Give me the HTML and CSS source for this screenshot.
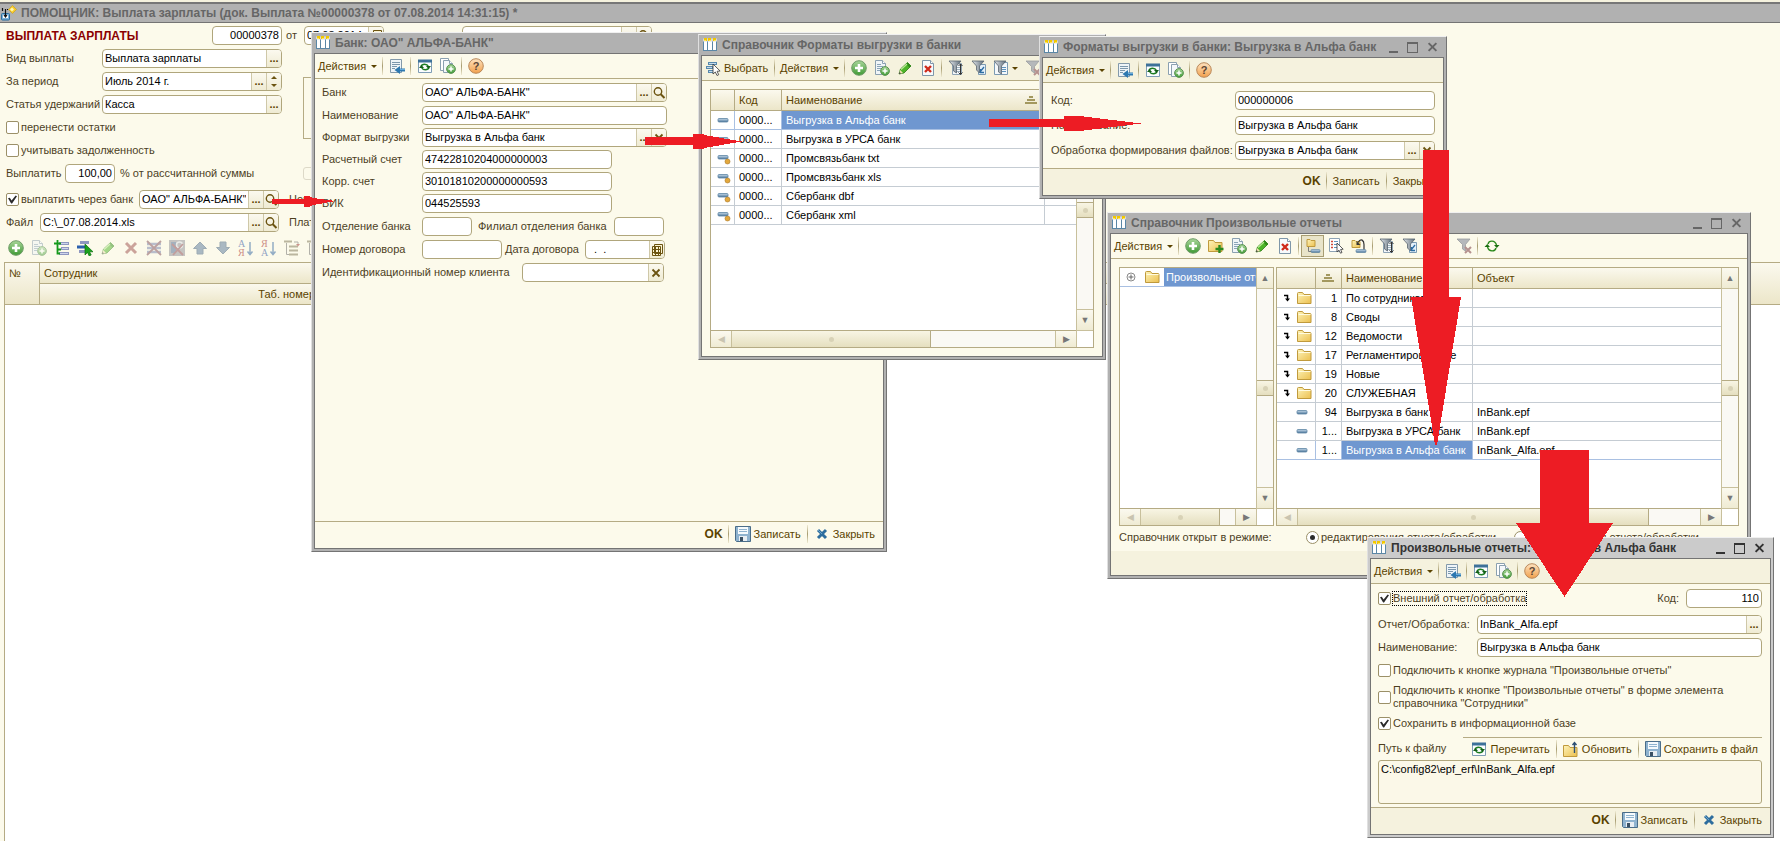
FILE: index.html
```html
<!DOCTYPE html>
<html lang="ru">
<head>
<meta charset="utf-8">
<title>ПОМОЩНИК: Выплата зарплаты</title>
<link rel="stylesheet" href="styles.css">
</head>
<body>
<svg class="defs" aria-hidden="true">
  <defs>
    <linearGradient id="g-green" x1="0" y1="0" x2="0" y2="1"><stop offset="0" stop-color="#a9d69a"/><stop offset="1" stop-color="#3f9a34"/></linearGradient>
    <linearGradient id="g-orange" x1="0" y1="0" x2="0" y2="1"><stop offset="0" stop-color="#fde3c0"/><stop offset="1" stop-color="#f2a04c"/></linearGradient>
    <linearGradient id="g-folder" x1="0" y1="0" x2="1" y2="1"><stop offset="0" stop-color="#fdf3b8"/><stop offset="1" stop-color="#ecc04f"/></linearGradient>
    <linearGradient id="g-steel" x1="0" y1="0" x2="1" y2="0"><stop offset="0" stop-color="#e4e8ec"/><stop offset="1" stop-color="#5f6d7a"/></linearGradient>
    <linearGradient id="g-blue" x1="0" y1="0" x2="0" y2="1"><stop offset="0" stop-color="#c9dcec"/><stop offset="1" stop-color="#4b7599"/></linearGradient>
  </defs>
  <symbol id="i-form" viewBox="0 0 16 16"><rect x="1.500" y="2.500" width="13" height="11" fill="#fff" stroke="#5b87a6"/><path d="M5.500 4v9M10.500 4v9" stroke="#5b87a6"/><path d="M1 3h14" stroke="#d9d9d9" stroke-width="3"/><path d="M2 2.500h3M6 2.500h3M11 2.500h3" stroke="#f2c800" stroke-width="3"/><path d="M2 3.500h2M7 3.500h2M12 3.500h2" stroke="#ffe75a"/></symbol>
  <symbol id="i-assist" viewBox="0 0 16 16"><rect x=".5" y="8.500" width="8" height="6.500" rx="1" fill="#7fb2d8" stroke="#2b6d9e"/><path d="M2 10h5v3H2z" fill="#fff"/><path d="M1.500 3v3M4.500 4v8M3 10l1.500 2L6 10" fill="none" stroke="#111" stroke-width="1.200"/><path d="M4 4.500h3" stroke="#111" stroke-dasharray="1 1"/><path d="M11.500.5L15.500 4.500l-4 4-4-4z" fill="#f7cb2d" stroke="#c89c12" stroke-width=".6"/><path d="M11 2.500l2 2-2 2-2-2z" fill="#fff8b5"/></symbol>
  <symbol id="i-import" viewBox="0 0 16 16"><path d="M1.500 1.500h11v13h-11z" fill="#eef4f8" stroke="#8399aa"/><path d="M3 4.500h8M3 6.500h8M3 8.500h5M3 10.500h3" stroke="#7b97ad"/><path d="M16 10.500h-5V8l-5.500 4 5.500 4v-2.500h5z" fill="#2d78b0"/><path d="M11 11.500h5" stroke="#66aadb"/></symbol>
  <symbol id="i-refresh" viewBox="0 0 16 16"><path d="M1.500 2.500h13v12h-13z" fill="#fbfdff" stroke="#7f9db5"/><path d="M1 3h14" stroke="#3d7199" stroke-width="3"/><path d="M4 8.500c1-3 6-3 7.500 0M12 9.500c-1 3-6 3-7.500 0" fill="none" stroke="#1d7d22" stroke-width="1.500"/><path d="M9 8h5l-2.500 3zM2 10h5L4.500 7z" fill="#125f17"/></symbol>
  <symbol id="i-cycle" viewBox="0 0 16 16"><path d="M4 6c1-4 7-4 8.500 1M12 10c-1 4-7 4-8.500-1" fill="none" stroke="#2a8a1c" stroke-width="1.400"/><path d="M10 7h5.500l-2.700 3zM.5 9H6L3.300 6z" fill="#1a6f10"/></symbol>
  <symbol id="i-plus" viewBox="0 0 16 16"><circle cx="8" cy="8" r="7.300" fill="url(#g-green)" stroke="#6f9c68"/><path d="M8 4v8M4 8h8" stroke="#fff" stroke-width="2.600"/></symbol>
  <symbol id="i-docplus" viewBox="0 0 16 16"><path d="M1.500.5h7l3 3v11h-10z" fill="#f0f5f8" stroke="#8ba0b0"/><path d="M8.500.5v3h3" fill="#fff" stroke="#8ba0b0"/><path d="M3 4.500h4M3 6.500h6M3 8.500h5M3 10.500h3" stroke="#8aa4b8"/><circle cx="11" cy="11" r="4.400" fill="url(#g-green)" stroke="#5b9454"/><path d="M11 8.500v5M8.500 11h5" stroke="#fff" stroke-width="1.500"/></symbol>
  <symbol id="i-copy" viewBox="0 0 16 16"><path d="M.5.500h8v12h-8z" fill="#fff" stroke="#8ba0b0"/><path d="M3.500 2.500h6l3 3v9h-9z" fill="#f5f8fb" stroke="#8ba0b0"/><path d="M9.500 2.500v3h3" fill="#fff" stroke="#8ba0b0"/><circle cx="11" cy="11" r="4.400" fill="url(#g-green)" stroke="#5b9454"/><path d="M11 8.500v5M8.500 11h5" stroke="#fff" stroke-width="1.500"/></symbol>
  <symbol id="i-help" viewBox="0 0 16 16"><circle cx="8" cy="8" r="7.300" fill="url(#g-orange)" stroke="#b9885a"/><text x="8" y="12" font-family="Liberation Sans, sans-serif" font-size="11" font-weight="bold" text-anchor="middle" fill="#5a4636">?</text></symbol>
  <symbol id="i-pencil" viewBox="0 0 16 16"><path d="M2 14l1.500-5 7-6.500 3.500 3.500-7 7z" fill="#4eb52a" stroke="#2d7a17" stroke-width=".8"/><path d="M9 4l3.500 3.500L14 6l-3.500-3.500z" fill="#2e8b17"/><path d="M4 9.500l6-5.500" stroke="#b7ea93" stroke-width="1.300"/><path d="M2 14l1.200-4 2.800 3z" fill="#f2e2b5"/><path d="M2 14l.6-2 1.400 1.400z" fill="#2b2b2b"/></symbol>
  <symbol id="i-delete" viewBox="0 0 16 16"><path d="M2.500.5h8l3 3v12h-11z" fill="#f7fafc" stroke="#7f97a9"/><path d="M10.500.5v3h3" fill="#fff" stroke="#7f97a9"/><path d="M5 6l6 6M11 6l-6 6" stroke="#cf2a1c" stroke-width="2.400"/></symbol>
  <symbol id="i-filter" viewBox="0 0 16 16"><path d="M4.500 3.500h9v11h-9z" fill="#f4f8fb" stroke="#8ea3b4"/><path d="M6 7.500h6M6 9.500h6M6 11.500h6" stroke="#9fb2c0"/><path d="M1 1h12L8.500 6v7l-3-2V6z" fill="url(#g-steel)" stroke="#59656f" stroke-width=".8"/><path d="M12.500 4v10M10.500 6l2-2 2 2M10.500 12.500l2 2 2-2" fill="none" stroke="#333"/></symbol>
  <symbol id="i-filterpick" viewBox="0 0 16 16"><path d="M7.500 4.500h7v10h-7z" fill="#e4f0f9" stroke="#7b9ab2"/><path d="M1 1h12L8.500 6v7l-3-3V6z" fill="url(#g-steel)" stroke="#59656f" stroke-width=".8"/><path d="M9 12l4-5M9.500 9v3.500H13" fill="none" stroke="#2c6da3" stroke-width="1.300"/></symbol>
  <symbol id="i-filterlist" viewBox="0 0 16 16"><path d="M1.500 2.500h13v12h-13z" fill="#f4f8fb" stroke="#7b9ab2"/><path d="M9 7.500h4M9 9.500h4M9 11.500h4" stroke="#5f93bd"/><path d="M1 1h12L8.500 6v8l-3-2V6z" fill="url(#g-steel)" stroke="#59656f" stroke-width=".8"/></symbol>
  <symbol id="i-filteroff" viewBox="0 0 16 16"><path d="M1 1h13L9.500 6.500V13l-3-2V6.500z" fill="#b5b8bb" stroke="#9a9da0" stroke-width=".8"/><path d="M9 9l6 6M15 9l-6 6" stroke="#b5918f" stroke-width="2"/></symbol>
  <symbol id="i-choose" viewBox="0 0 16 16"><path d="M3 3.500h9M1 7.500h7M3 11.500h5" stroke="#5788ad" stroke-width="3"/><path d="M4 3.500h7M2 7.500h5M4 11.500h4" stroke="#c4dbec"/><path d="M8 4v10l2.300-2 1.700 3.500 1.700-.8-1.600-3.400 3-.3z" fill="#fff" stroke="#333" stroke-width=".8"/></symbol>
  <symbol id="i-folder" viewBox="0 0 16 16"><path d="M1.500 3.500a1 1 0 011-1h4l1.500 2h6a1 1 0 011 1v8h-13.500z" fill="url(#g-folder)" stroke="#c09a3c"/><path d="M2.500 5.500h12" stroke="#fffbe0"/></symbol>
  <symbol id="i-folderplus" viewBox="0 0 16 16"><path d="M.5 2.500h5l1.500 2h7v9H.5z" fill="url(#g-folder)" stroke="#c09a3c"/><path d="M11.500 7v8M7.500 11h8" stroke="#2b8a1e" stroke-width="2.400"/></symbol>
  <symbol id="i-folderup" viewBox="0 0 16 16"><path d="M.5 4.500h5l1.500 2h7v9H.5z" fill="url(#g-folder)" stroke="#c09a3c"/><path d="M11.500 12V2M9.500 4l2-2.500 2 2.500" fill="none" stroke="#2c4f74" stroke-width="1.400"/></symbol>
  <symbol id="i-hier" viewBox="0 0 16 16"><path d="M2 1.500h3l1 1h4v6H2z" fill="url(#g-folder)" stroke="#c09a3c"/><path d="M3.500 9v4.500H6" fill="none" stroke="#7c7c7c"/><rect x="6" y="11.500" width="9" height="3" rx="1" fill="url(#g-blue)" stroke="#567e9d" stroke-width=".6"/></symbol>
  <symbol id="i-listcur" viewBox="0 0 16 16"><path d="M1.500.5h10v13h-10z" fill="#fff" stroke="#8ea3b4"/><path d="M3 3.500h2M3 6.500h2M3 9.500h2" stroke="#d14a3a" stroke-width="1.500"/><path d="M6 3.500h4M6 6.500h4M6 9.500h4" stroke="#5f93bd"/><path d="M9 5v9l2-1.800 1.500 3 1.500-.7-1.400-3 2.600-.3z" fill="#fff" stroke="#333" stroke-width=".8"/></symbol>
  <symbol id="i-levelup" viewBox="0 0 16 16"><path d="M1 2.500h3l1 1h4v6H1z" fill="url(#g-folder)" stroke="#c09a3c"/><path d="M7 4.500c3-5 6-2 6 2V12" fill="none" stroke="#333" stroke-width="1.200"/><path d="M5.500 3v4h4z" fill="#333"/><rect x="5" y="11.500" width="10" height="3" rx="1" fill="url(#g-blue)" stroke="#567e9d" stroke-width=".6"/></symbol>
  <symbol id="i-item" viewBox="0 0 16 16"><rect x="3" y="6.500" width="10" height="3.500" rx="1" fill="url(#g-blue)" stroke="#5c84a3" stroke-width=".8"/></symbol>
  <symbol id="i-itemdot" viewBox="0 0 16 16"><rect x="3" y="5.500" width="10" height="3.500" rx="1" fill="url(#g-blue)" stroke="#5c84a3" stroke-width=".8"/><circle cx="12.500" cy="11.500" r="2.500" fill="#e3a83c" stroke="#a9782a" stroke-width=".6"/></symbol>
  <symbol id="i-into" viewBox="0 0 8 8"><path d="M1 1.500h3.500V6" fill="none" stroke="#000" stroke-width="1.500"/><path d="M2 4.500h5L4.500 7.500z" fill="#000"/></symbol>
  <symbol id="i-expand" viewBox="0 0 10 10"><circle cx="5" cy="5" r="4" fill="#fff" stroke="#8a8a8a"/><path d="M2.500 5h5M5 2.500v5" stroke="#666"/></symbol>
  <symbol id="i-save" viewBox="0 0 16 16"><path d="M.5.500h15v15h-14l-1-1z" fill="#8fb3cf" stroke="#4a6d89"/><path d="M3 1h10v7H3z" fill="#f5fafd"/><path d="M4 3.500h8M4 5.500h8" stroke="#8fb3cf"/><path d="M4 10h8v5H4z" fill="#e8eef3"/><path d="M5 11h3v4H5z" fill="#3a5063"/></symbol>
  <symbol id="i-cross" viewBox="0 0 16 16"><path d="M4 4l8 8M12 4l-8 8" stroke="#2d6d9e" stroke-width="3"/><path d="M4 4l4 4" stroke="#6aa3cb"/></symbol>
  <symbol id="i-mag" viewBox="0 0 16 16"><circle cx="7" cy="6.500" r="3.700" fill="none" stroke="#6b5310" stroke-width="1.400"/><path d="M9.500 9l4 4" stroke="#6b5310" stroke-width="2"/></symbol>
  <symbol id="i-clear" viewBox="0 0 16 16"><path d="M4.500 4.500l7 7M11.500 4.500l-7 7" stroke="#6b5310" stroke-width="1.800"/></symbol>
  <symbol id="i-cal" viewBox="0 0 16 16"><path d="M5.500 2.500h8v9h-8zM3.500 4.500h8v9h-8z" fill="#fbf4d2" stroke="#6b5310"/><path d="M3 7.500h9M3 10.500h9M6.500 4v10M9.500 4v10" stroke="#6b5310"/></symbol>
  <symbol id="i-addrow" viewBox="0 0 16 16"><path d="M5 3.500h10M7 8.500h8M5 13.500h10" stroke="#8f97c0" stroke-width="3"/><path d="M6 3.500h8M8 8.500h6M6 13.500h8" stroke="#cfd5ea"/><path d="M3.500 0v7M0 3.500h7M3.500 7v6.500H6M3.500 9.500H7" fill="none" stroke="#159a1a" stroke-width="1.800"/></symbol>
  <symbol id="i-selrow" viewBox="0 0 16 16"><path d="M3 2.500h9M2 11.500h9" stroke="#8f97c0" stroke-width="3"/><path d="M0 7h10" stroke="#2b60ad" stroke-width="3"/><path d="M8 4v11l2.500-2.500 1.700 3.500 2-1-1.700-3.200H16z" fill="#1aa31f" stroke="#0b6e10" stroke-width=".7"/></symbol>
  <symbol id="i-x" viewBox="0 0 16 16"><path d="M3 3l10 10M13 3L3 13" stroke="#9b4e4c" stroke-width="3"/></symbol>
  <symbol id="i-rowx" viewBox="0 0 16 16"><path d="M1 4h14M1 8h14M1 12h14" stroke="#7682ad" stroke-width="2.500"/><path d="M1 1l14 14M15 1L1 15" stroke="#7d4a57" stroke-width="1.800"/></symbol>
  <symbol id="i-endx" viewBox="0 0 16 16"><path d="M0 0h16v16H0z" fill="#8f8f98"/><path d="M2 2h5v11H2z" fill="#4e6a92"/><circle cx="10.500" cy="5" r="3" fill="none" stroke="#d7dbe3" stroke-width="1.500"/><path d="M3 4l11 11M14 4L4 15" stroke="#8a4450" stroke-width="1.800"/></symbol>
  <symbol id="i-up" viewBox="0 0 16 16"><path d="M8 2l6.500 6.500H11V14H5V8.500H1.500z" fill="#58799b" stroke="#43617f"/></symbol>
  <symbol id="i-down" viewBox="0 0 16 16"><path d="M8 14L1.500 7.500H5V2h6v5.500h3.500z" fill="#58799b" stroke="#43617f"/></symbol>
  <symbol id="i-az" viewBox="0 0 16 16"><text x="0" y="7" font-family="Liberation Serif, serif" font-size="10" fill="#1e4da0">А</text><text x="0" y="16" font-family="Liberation Serif, serif" font-size="10" fill="#9c2020">Я</text><path d="M12 2v12M9.500 11.500L12 14.500l2.500-3" fill="none" stroke="#2d62a0" stroke-width="1.500"/></symbol>
  <symbol id="i-za" viewBox="0 0 16 16"><text x="0" y="7" font-family="Liberation Serif, serif" font-size="10" fill="#9c2020">Я</text><text x="0" y="16" font-family="Liberation Serif, serif" font-size="10" fill="#1e4da0">А</text><path d="M12 2v12M9.500 11.500L12 14.500l2.500-3" fill="none" stroke="#2d62a0" stroke-width="1.500"/></symbol>
  <symbol id="i-tree" viewBox="0 0 16 16"><path d="M0 1.500h8M5 6.500h9M5 10.500h9M5 14.500h9" stroke="#7c7455" stroke-width="2"/><path d="M2.500 3v11.500H5M10 2h4v3" fill="none" stroke="#6a6a6a"/><path d="M12 4h4l-2 2.500z" fill="#a03030"/></symbol>
  <symbol id="i-sort" viewBox="0 0 16 16"><path d="M6 4h4v2H6zM4 7h8v2H4zM2 10h12v2H2z" fill="#a3985f"/></symbol>
</svg>

<main class="main">
  <header class="main-title"><svg class="ic"><use href="#i-assist"/></svg><h1>ПОМОЩНИК: Выплата зарплаты (док. Выплата №00000378 от 07.08.2014 14:31:15) *</h1></header>
  <div class="main-head">
    <h2>ВЫПЛАТА ЗАРПЛАТЫ</h2>
    <span class="field w70"><input class="num" aria-label="Номер" value="00000378"></span>
    <label for="m-date">от</label>
    <span class="field w80 m-date"><input id="m-date" value="07.08.2014"><button aria-label="Календарь"><svg class="ic"><use href="#i-cal"/></svg></button></span>
    <span class="field w190"><input aria-label="Организация"><button>...</button><button aria-label="Открыть"><svg class="ic"><use href="#i-mag"/></svg></button></span>
  </div>
  <div class="main-cols">
    <div class="main-left">
      <div class="row"><label class="l96" for="m-kind">Вид выплаты</label><span class="field w180"><input id="m-kind" value="Выплата зарплаты"><button>...</button></span></div>
      <div class="row"><label class="l96" for="m-per">За период</label><span class="field w180"><input id="m-per" value="Июль 2014 г."><button>...</button><button class="spin" aria-label="Изменить период"></button></span></div>
      <div class="row"><label class="l96" for="m-art">Статья удержаний</label><span class="field w180"><input id="m-art" value="Касса"><button>...</button></span></div>
      <div class="row"><label class="chk"><input type="checkbox">перенести остатки</label></div>
      <div class="row"><label class="chk"><input type="checkbox">учитывать задолженность</label></div>
      <div class="row"><label class="l59" for="m-pct">Выплатить</label><span class="field w50"><input id="m-pct" class="num" value="100,00"></span><span class="after">% от рассчитанной суммы</span></div>
      <div class="row low"><label class="chk l133"><input type="checkbox" checked>выплатить через банк</label><span class="field w140"><input aria-label="Банк" value="ОАО&quot; АЛЬФА-БАНК&quot;"><button>...</button><button aria-label="Открыть"><svg class="ic"><use href="#i-mag"/></svg></button></span><span class="next">Номер</span></div>
      <div class="row"><label class="l34" for="m-file">Файл</label><span class="field w239"><input id="m-file" value="C:\_07.08.2014.xls"><button>...</button><button aria-label="Открыть"><svg class="ic"><use href="#i-mag"/></svg></button></span><span class="next">Платежный документ</span></div>
    </div>
    <div class="main-right"><div class="group"></div><div class="ghost"></div></div>
  </div>
  <div class="main-tools">
    <button aria-label="Добавить"><svg class="ic"><use href="#i-plus"/></svg></button>
    <button aria-label="Скопировать" disabled><svg class="ic"><use href="#i-docplus"/></svg></button>
    <button aria-label="Вставить строку"><svg class="ic"><use href="#i-addrow"/></svg></button>
    <button aria-label="Подбор"><svg class="ic"><use href="#i-selrow"/></svg></button>
    <button aria-label="Изменить" disabled><svg class="ic"><use href="#i-pencil"/></svg></button>
    <button aria-label="Удалить" disabled><svg class="ic"><use href="#i-x"/></svg></button>
    <button aria-label="Очистить строки" disabled><svg class="ic"><use href="#i-rowx"/></svg></button>
    <button aria-label="Завершить" disabled><svg class="ic"><use href="#i-endx"/></svg></button>
    <button aria-label="Вверх" disabled><svg class="ic"><use href="#i-up"/></svg></button>
    <button aria-label="Вниз" disabled><svg class="ic"><use href="#i-down"/></svg></button>
    <button aria-label="По возрастанию" disabled><svg class="ic"><use href="#i-az"/></svg></button>
    <button aria-label="По убыванию" disabled><svg class="ic"><use href="#i-za"/></svg></button>
    <button aria-label="Структура" disabled><svg class="ic"><use href="#i-tree"/></svg></button>
    <button aria-label="Группы" disabled><svg class="ic"><use href="#i-tree"/></svg></button>
  </div>
  <div class="main-table">
    <table class="list">
      <colgroup><col class="c35"><col class="c280"><col><col class="c100"></colgroup>
      <thead>
        <tr><th rowspan="2" class="top">№</th><th>Сотрудник</th><th></th><th rowspan="2"></th></tr>
        <tr><th class="right">Таб. номер</th><th></th></tr>
      </thead>
    </table>
  </div>
</main>

<section class="win w-bank">
  <header class="titlebar"><svg class="ic"><use href="#i-form"/></svg><h2>Банк: ОАО" АЛЬФА-БАНК"</h2></header>
  <div class="body">
    <div class="tools plain"><button class="menu">Действия<i class="caret"></i></button><i class="sep"></i><button aria-label="Записать"><svg class="ic"><use href="#i-import"/></svg></button><i class="sep"></i><button aria-label="Перечитать"><svg class="ic"><use href="#i-refresh"/></svg></button><button aria-label="Скопировать"><svg class="ic"><use href="#i-copy"/></svg></button><i class="sep"></i><button aria-label="Справка"><svg class="ic"><use href="#i-help"/></svg></button></div>
    <div class="form bank-form">
      <div class="row wide"><label class="l100" for="b1">Банк</label><span class="field w245"><input id="b1" value="ОАО&quot; АЛЬФА-БАНК&quot;"><button>...</button><button aria-label="Открыть"><svg class="ic"><use href="#i-mag"/></svg></button></span></div>
      <div class="row wide"><label class="l100" for="b2">Наименование</label><span class="field w245"><input id="b2" value="ОАО&quot; АЛЬФА-БАНК&quot;"></span></div>
      <div class="row"><label class="l100" for="b3">Формат выгрузки</label><span class="field w245"><input id="b3" value="Выгрузка в Альфа банк"><button>...</button><button aria-label="Очистить"><svg class="ic"><use href="#i-clear"/></svg></button></span></div>
      <div class="row"><label class="l100" for="b4">Расчетный счет</label><span class="field w190"><input id="b4" value="47422810204000000003"></span></div>
      <div class="row"><label class="l100" for="b5">Корр. счет</label><span class="field w190"><input id="b5" value="30101810200000000593"></span></div>
      <div class="row"><label class="l100" for="b6">БИК</label><span class="field w190"><input id="b6" value="044525593"></span></div>
      <div class="row wide"><label class="l100" for="b7">Отделение банка</label><span class="field w50"><input id="b7"></span><label class="l142" for="b8">Филиал отделения банка</label><span class="field w50"><input id="b8"></span></div>
      <div class="row wide"><label class="l100" for="b9">Номер договора</label><span class="field w80"><input id="b9"></span><label class="l83" for="b10">Дата договора</label><span class="field w80"><input id="b10" value="  .  ."><button aria-label="Календарь"><svg class="ic"><use href="#i-cal"/></svg></button></span></div>
      <div class="row wide"><label class="l200" for="b11">Идентификационный номер клиента</label><span class="field w142"><input id="b11"><button aria-label="Очистить"><svg class="ic"><use href="#i-clear"/></svg></button></span></div>
    </div>
    <footer class="foot plain"><button class="ok">OK</button><i class="sep"></i><button class="txt"><svg class="ic"><use href="#i-save"/></svg>Записать</button><i class="sep"></i><button class="txt"><svg class="ic"><use href="#i-cross"/></svg>Закрыть</button></footer>
  </div>
</section>

<section class="win w-formats">
  <header class="titlebar"><svg class="ic"><use href="#i-form"/></svg><h2>Справочник Форматы выгрузки в банки</h2></header>
  <div class="body">
    <div class="tools"><button class="choose"><svg class="ic"><use href="#i-choose"/></svg>Выбрать</button><i class="sep"></i><button class="menu">Действия<i class="caret"></i></button><i class="sep"></i><button aria-label="Добавить"><svg class="ic"><use href="#i-plus"/></svg></button><button aria-label="Скопировать"><svg class="ic"><use href="#i-docplus"/></svg></button><button aria-label="Изменить"><svg class="ic"><use href="#i-pencil"/></svg></button><button aria-label="Удалить"><svg class="ic"><use href="#i-delete"/></svg></button><i class="sep"></i><button aria-label="Отбор и сортировка"><svg class="ic"><use href="#i-filter"/></svg></button><button aria-label="Отбор по значению"><svg class="ic"><use href="#i-filterpick"/></svg></button><button class="drop" aria-label="История отборов"><svg class="ic"><use href="#i-filterlist"/></svg><i class="caret"></i></button><button aria-label="Отключить отбор" disabled><svg class="ic"><use href="#i-filteroff"/></svg></button></div>
    <div class="content">
      <div class="frame">
        <div class="pane">
          <table class="list">
            <colgroup><col class="c24"><col class="c47"><col class="c263"><col></colgroup>
            <thead><tr><th></th><th>Код</th><th><span class="th-sort">Наименование<svg class="ic"><use href="#i-sort"/></svg></span></th><th></th></tr></thead>
            <tbody>
              <tr class="cur"><td class="pic"><svg class="ic"><use href="#i-item"/></svg></td><td>0000...</td><td class="sel">Выгрузка в Альфа банк</td><td></td></tr>
              <tr><td class="pic"><svg class="ic"><use href="#i-item"/></svg></td><td>0000...</td><td>Выгрузка в УРСА банк</td><td></td></tr>
              <tr><td class="pic"><svg class="ic"><use href="#i-itemdot"/></svg></td><td>0000...</td><td>Промсвязьбанк txt</td><td></td></tr>
              <tr><td class="pic"><svg class="ic"><use href="#i-itemdot"/></svg></td><td>0000...</td><td>Промсвязьбанк xls</td><td></td></tr>
              <tr><td class="pic"><svg class="ic"><use href="#i-itemdot"/></svg></td><td>0000...</td><td>Сбербанк dbf</td><td></td></tr>
              <tr><td class="pic"><svg class="ic"><use href="#i-itemdot"/></svg></td><td>0000...</td><td>Сбербанк xml</td><td></td></tr>
            </tbody>
          </table>
        </div>
        <div class="vs"><button aria-label="Вверх">▲</button><i class="track"></i><i class="thumb"></i><i class="track"></i><button aria-label="Вниз">▼</button></div>
        <div class="hs"><button class="dim" aria-label="Влево">◀</button><i class="thumb t199"></i><i class="track"></i><button aria-label="Вправо">▶</button></div>
        <div class="corner"></div>
      </div>
    </div>
  </div>
</section>

<section class="win w-format">
  <header class="titlebar"><svg class="ic"><use href="#i-form"/></svg><h2>Форматы выгрузки в банки: Выгрузка в Альфа банк</h2><span class="ctl"><button class="min" aria-label="Свернуть"></button><button class="max" aria-label="Развернуть"></button><button class="cls" aria-label="Закрыть окно"></button></span></header>
  <div class="body">
    <div class="tools"><button class="menu">Действия<i class="caret"></i></button><i class="sep"></i><button aria-label="Записать"><svg class="ic"><use href="#i-import"/></svg></button><i class="sep"></i><button aria-label="Перечитать"><svg class="ic"><use href="#i-refresh"/></svg></button><button aria-label="Скопировать"><svg class="ic"><use href="#i-copy"/></svg></button><i class="sep"></i><button aria-label="Справка"><svg class="ic"><use href="#i-help"/></svg></button></div>
    <div class="form format-form">
      <div class="row"><label class="l184" for="f1">Код:</label><span class="field grow"><input id="f1" value="000000006"></span></div>
      <div class="row"><label class="l184" for="f2">Наименование:</label><span class="field grow"><input id="f2" value="Выгрузка в Альфа банк"></span></div>
      <div class="row"><label class="l184" for="f3">Обработка формирования файлов:</label><span class="field grow"><input id="f3" value="Выгрузка в Альфа банк"><button>...</button><button aria-label="Очистить"><svg class="ic"><use href="#i-clear"/></svg></button></span></div>
    </div>
    <footer class="foot"><button class="ok">OK</button><i class="sep"></i><button class="txt">Записать</button><i class="sep"></i><button class="txt">Закрыть</button></footer>
  </div>
</section>

<section class="win w-reports">
  <header class="titlebar"><svg class="ic"><use href="#i-form"/></svg><h2>Справочник Произвольные отчеты</h2><span class="ctl"><button class="min" aria-label="Свернуть"></button><button class="max" aria-label="Развернуть"></button><button class="cls" aria-label="Закрыть окно"></button></span></header>
  <div class="body">
    <div class="tools plain"><button class="menu">Действия<i class="caret"></i></button><i class="sep"></i><button aria-label="Добавить"><svg class="ic"><use href="#i-plus"/></svg></button><button aria-label="Новая группа"><svg class="ic"><use href="#i-folderplus"/></svg></button><button aria-label="Скопировать"><svg class="ic"><use href="#i-docplus"/></svg></button><button aria-label="Изменить"><svg class="ic"><use href="#i-pencil"/></svg></button><button aria-label="Удалить"><svg class="ic"><use href="#i-delete"/></svg></button><i class="sep"></i><button class="pressed" aria-label="Иерархия"><svg class="ic"><use href="#i-hier"/></svg></button><button aria-label="Переместить"><svg class="ic"><use href="#i-listcur"/></svg></button><button aria-label="На уровень вверх"><svg class="ic"><use href="#i-levelup"/></svg></button><i class="sep"></i><button aria-label="Отбор и сортировка"><svg class="ic"><use href="#i-filter"/></svg></button><button aria-label="Отбор по значению"><svg class="ic"><use href="#i-filterpick"/></svg></button><button class="drop" aria-label="История отборов"><svg class="ic"><use href="#i-filterlist"/></svg><i class="caret"></i></button><button aria-label="Отключить отбор" disabled><svg class="ic"><use href="#i-filteroff"/></svg></button><i class="sep"></i><button aria-label="Обновить"><svg class="ic"><use href="#i-cycle"/></svg></button></div>
    <div class="content split">
      <div class="frame tree">
        <div class="pane"><div class="node"><button class="exp" aria-label="Раскрыть"><svg class="ic-10"><use href="#i-expand"/></svg></button><svg class="ic"><use href="#i-folder"/></svg><span class="sel">Произвольные отчеты</span></div></div>
        <div class="vs"><button aria-label="Вверх">▲</button><i class="track"></i><i class="thumb"></i><i class="track"></i><button aria-label="Вниз">▼</button></div>
        <div class="hs"><button class="dim" aria-label="Влево">◀</button><i class="thumb t79"></i><i class="track"></i><button aria-label="Вправо">▶</button></div>
        <div class="corner"></div>
      </div>
      <div class="frame">
        <div class="pane">
          <table class="list">
            <colgroup><col class="c39"><col class="c26"><col class="c131"><col></colgroup>
            <thead><tr><th></th><th class="pic"><svg class="ic"><use href="#i-sort"/></svg></th><th>Наименование</th><th>Объект</th></tr></thead>
            <tbody>
              <tr><td class="pic"><span class="fold"><svg class="ic-8"><use href="#i-into"/></svg><svg class="ic"><use href="#i-folder"/></svg></span></td><td class="n">1</td><td>По сотрудникам</td><td></td></tr>
              <tr><td class="pic"><span class="fold"><svg class="ic-8"><use href="#i-into"/></svg><svg class="ic"><use href="#i-folder"/></svg></span></td><td class="n">8</td><td>Своды</td><td></td></tr>
              <tr><td class="pic"><span class="fold"><svg class="ic-8"><use href="#i-into"/></svg><svg class="ic"><use href="#i-folder"/></svg></span></td><td class="n">12</td><td>Ведомости</td><td></td></tr>
              <tr><td class="pic"><span class="fold"><svg class="ic-8"><use href="#i-into"/></svg><svg class="ic"><use href="#i-folder"/></svg></span></td><td class="n">17</td><td>Регламентированные</td><td></td></tr>
              <tr><td class="pic"><span class="fold"><svg class="ic-8"><use href="#i-into"/></svg><svg class="ic"><use href="#i-folder"/></svg></span></td><td class="n">19</td><td>Новые</td><td></td></tr>
              <tr><td class="pic"><span class="fold"><svg class="ic-8"><use href="#i-into"/></svg><svg class="ic"><use href="#i-folder"/></svg></span></td><td class="n">20</td><td>СЛУЖЕБНАЯ</td><td></td></tr>
              <tr><td class="pic one"><svg class="ic"><use href="#i-item"/></svg></td><td class="n">94</td><td>Выгрузка в банк</td><td>InBank.epf</td></tr>
              <tr><td class="pic one"><svg class="ic"><use href="#i-item"/></svg></td><td class="n">1...</td><td>Выгрузка в УРСА банк</td><td>InBank.epf</td></tr>
              <tr class="cur"><td class="pic one"><svg class="ic"><use href="#i-item"/></svg></td><td class="n">1...</td><td class="sel">Выгрузка в Альфа банк</td><td>InBank_Alfa.epf</td></tr>
            </tbody>
          </table>
        </div>
        <div class="vs"><button aria-label="Вверх">▲</button><i class="track"></i><i class="thumb"></i><i class="track"></i><button aria-label="Вниз">▼</button></div>
        <div class="hs"><button class="dim" aria-label="Влево">◀</button><i class="thumb t351"></i><i class="track"></i><button aria-label="Вправо">▶</button></div>
        <div class="corner"></div>
      </div>
    </div>
    <div class="mode"><span class="l187">Справочник открыт в режиме:</span><label class="chk"><input type="radio" name="mode" checked>редактирования отчета/обработки</label><label class="chk"><input type="radio" name="mode">формирования отчета/обработки</label></div>
    <footer class="foot bare"></footer>
  </div>
</section>

<section class="win active w-report">
  <header class="titlebar"><svg class="ic"><use href="#i-form"/></svg><h2>Произвольные отчеты: Выгрузка в Альфа банк</h2><span class="ctl"><button class="min" aria-label="Свернуть"></button><button class="max" aria-label="Развернуть"></button><button class="cls" aria-label="Закрыть окно"></button></span></header>
  <div class="body">
    <div class="tools"><button class="menu">Действия<i class="caret"></i></button><i class="sep"></i><button aria-label="Записать"><svg class="ic"><use href="#i-import"/></svg></button><i class="sep"></i><button aria-label="Перечитать"><svg class="ic"><use href="#i-refresh"/></svg></button><button aria-label="Скопировать"><svg class="ic"><use href="#i-copy"/></svg></button><i class="sep"></i><button aria-label="Справка"><svg class="ic"><use href="#i-help"/></svg></button></div>
    <div class="form report-form">
      <div class="row first"><label class="chk"><input type="checkbox" checked><span class="focus">Внешний отчет/обработка</span></label><label class="push" for="r0">Код:</label><span class="field w76"><input id="r0" class="num" value="110"></span></div>
      <div class="row"><label class="l99" for="r1">Отчет/Обработка:</label><span class="field grow"><input id="r1" value="InBank_Alfa.epf"><button>...</button></span></div>
      <div class="row"><label class="l99" for="r2">Наименование:</label><span class="field grow"><input id="r2" value="Выгрузка в Альфа банк"></span></div>
      <div class="row"><label class="chk"><input type="checkbox">Подключить к кнопке журнала "Произвольные отчеты"</label></div>
      <div class="row tall"><label class="chk"><input type="checkbox"><span>Подключить к кнопке "Произвольные отчеты" в форме элемента справочника "Сотрудники"</span></label></div>
      <div class="row"><label class="chk"><input type="checkbox" checked>Сохранить в информационной базе</label></div>
      <div class="path-head"><label for="r3">Путь к файлу</label><div class="path-tools"><button class="txt"><svg class="ic"><use href="#i-refresh"/></svg>Перечитать</button><i class="sep"></i><button class="txt"><svg class="ic"><use href="#i-folderup"/></svg>Обновить</button><i class="sep"></i><button class="txt"><svg class="ic"><use href="#i-save"/></svg>Сохранить в файл</button></div></div>
      <textarea id="r3" class="path">C:\config82\epf_erf\InBank_Alfa.epf</textarea>
    </div>
    <footer class="foot"><button class="ok">OK</button><i class="sep"></i><button class="txt"><svg class="ic"><use href="#i-save"/></svg>Записать</button><i class="sep"></i><button class="txt"><svg class="ic"><use href="#i-cross"/></svg>Закрыть</button></footer>
  </div>
</section>

<svg class="arrows" width="1780" height="841" viewBox="0 0 1780 841" aria-hidden="true">
  <path d="M272 199H304V196H309L313 198 336 201 313 205 309 207H304V204H272z"/>
  <path d="M645 137H693V134H704V135L742 141.500 704 148V149H693V145H645z"/>
  <path d="M989 119H1064V116H1080L1141 123.500 1080 131H1064V127H989z"/>
  <path d="M1423 150H1449V297H1461L1437 445H1435L1411 297H1423z"/>
  <path d="M1540 450H1589V523H1613L1564.500 597 1516 523H1540z"/>
</svg>
</body>
</html>
```
FILE: styles.css
```css
* { box-sizing: border-box; }
html, body { height: 100%; }
body {
  margin: 0;
  overflow: hidden;
  position: relative;
  background: #fcfaeb;
  font-family: "Liberation Sans", Arial, sans-serif;
  font-size: 11px;
  line-height: 13px;
  color: #4c3f1f;
}
button, input, textarea { font: inherit; color: inherit; margin: 0; padding: 0; border: 0; background: none; outline: 0; border-radius: 0; }
h1, h2 { margin: 0; font-size: 12px; line-height: 14px; white-space: nowrap; }
label, span { white-space: nowrap; }
.defs { position: absolute; width: 0; height: 0; }
.ic { width: 16px; height: 16px; flex: none; display: block; }
.ic-8 { width: 8px; height: 8px; flex: none; }
.ic-10 { width: 10px; height: 10px; flex: none; display: block; }

/* Main window */
.main { height: 100%; display: flex; flex-direction: column; border-top: 2px solid #f5f2de; }
.main-title {
  height: 21px; flex: none; display: flex; align-items: center; gap: 4px;
  background: #b1b1b1; color: #666; border-top: 2px solid #777; border-bottom: 1px solid #747474; padding-left: 1px;
}
.main-head { display: flex; align-items: center; padding: 3px 0 0 6px; }
.main-head h2 { width: 206px; color: #8b0000; }
.main-head label { width: 22px; padding-left: 4px; }
.m-date { margin-right: 78px; }
.main-cols { display: flex; }
.main-left { width: 303px; flex: none; padding-left: 6px; }
.main-left .row { margin-top: 4px; }
.main-left .low { margin-top: 7px; }
.main-right { flex: 1; padding-top: 32px; }
.group { width: 220px; height: 62px; border: 1px solid #b5ab84; }
.ghost { width: 100px; height: 13px; margin-top: 28px; border: 1px solid #ddd9c8; border-radius: 3px; }
.after { padding-left: 5px; }
.next { padding-left: 10px; }
.main-tools { display: flex; gap: 7px; padding: 8px 0 6px 8px; }
.main-tools button:disabled { opacity: .5; }
.main-table { flex: 1; margin-left: 4px; border: solid #b5ab84; border-width: 1px 0 0 1px; background: #fff; }

/* Rows and fields */
.row { display: flex; align-items: center; height: 19px; flex: none; }
.row > * { flex: none; }
.field { display: flex; height: 19px; flex: none; border: 1px solid #b0a67c; border-radius: 4px; background: #fff; overflow: hidden; }
.field input { flex: 1; min-width: 0; width: 0; padding: 0 2px; color: #000; white-space: pre; }
.field .num { text-align: right; }
.field button { width: 15px; flex: none; border-left: 1px solid #cfc8a8; background: linear-gradient(#fbf9ef, #efebd3); color: #5a4300; font-weight: bold; display: flex; align-items: center; justify-content: center; }
.row > .grow { flex: 1; }
.field .spin { position: relative; }
.spin::before, .spin::after { content: ""; position: absolute; left: 4px; border: 3px solid transparent; }
.spin::before { top: 0; border-bottom-color: #6b5310; }
.spin::after { bottom: 0; border-top-color: #6b5310; }
.w50 { width: 50px; } .w70 { width: 70px; } .w76 { width: 76px; } .w80 { width: 80px; } .w140 { width: 140px; } .w142 { width: 142px; }
.w180 { width: 180px; } .w190 { width: 190px; } .w239 { width: 239px; } .w245 { width: 245px; }
.l34 { width: 34px; } .l59 { width: 59px; } .l83 { width: 83px; padding-left: 3px; } .l96 { width: 96px; } .l99 { width: 99px; } .l100 { width: 100px; }
.l133 { width: 133px; } .l142 { width: 142px; padding-left: 6px; } .l184 { width: 184px; } .l187 { width: 187px; } .l200 { width: 200px; }

.chk { display: flex; align-items: center; gap: 2px; }
.chk input { appearance: none; width: 13px; height: 13px; flex: none; border: 1px solid #9b9068; border-radius: 2px; background: #fff; }
.chk input[type=radio] { border-radius: 50%; }
.chk input:checked::after { content: ""; display: block; width: 9px; height: 9px; margin: 1px; background: #2b2b2b; clip-path: polygon(0 35%, 20% 30%, 40% 60%, 85% 5%, 100% 15%, 45% 95%, 35% 95%); }
.chk input[type=radio]:checked::after { width: 5px; height: 5px; margin: 3px; border-radius: 50%; clip-path: none; }

/* Child windows */
.win {
  position: absolute; display: flex; flex-direction: column;
  padding: 0 2px 2px; background: #b1b1b1;
  border: 1px solid; border-color: #f0f0f0 #747474 #747474 #e0e0e0;
}
.titlebar { height: 20px; flex: none; display: flex; align-items: center; gap: 4px; padding-left: 1px; color: #666; }
.win.active { background: #cbcbcb; }
.active .titlebar { color: #333; }
.w-bank { left: 311px; top: 32px; width: 576px; min-height: 520px; }
.w-formats { left: 698px; top: 34px; width: 408px; min-height: 326px; }
.w-format { left: 1039px; top: 36px; width: 408px; min-height: 161px; }
.w-reports { left: 1107px; top: 212px; width: 644px; min-height: 367px; }
.w-report { left: 1367px; top: 537px; width: 407px; min-height: 301px; }
.body { flex: 1; display: flex; flex-direction: column; background: #fcfaeb; border: 1px solid #747474; }
.ctl { margin-left: auto; display: flex; gap: 9px; padding-right: 6px; }
.ctl button { width: 11px; height: 11px; position: relative; }
.ctl .min { border-bottom: 2px solid; width: 9px; }
.ctl .max { border: 1px solid; border-top-width: 2px; }
.ctl .cls::before, .ctl .cls::after { content: ""; position: absolute; left: 0; top: 4px; width: 11px; height: 2px; background: currentColor; transform: rotate(45deg); }
.ctl .cls::after { transform: rotate(-45deg); }

.tools { height: 25px; flex: none; display: flex; align-items: center; background: #f5f2de; border-bottom: 1px solid #b5ab84; color: #5a4300; overflow: hidden; }
.plain { background: #fcfaeb; }
.tools button { width: 23px; height: 22px; flex: none; display: flex; align-items: center; justify-content: center; }
.tools .menu { width: 65px; padding-left: 3px; gap: 5px; justify-content: flex-start; }
.tools .choose { width: 70px; padding-left: 3px; gap: 3px; justify-content: flex-start; }
.tools .drop { width: 31px; gap: 3px; }
.tools .pressed { border: 1px solid #a89d72; background: #e9e4c9; }
.caret { border: 3px solid transparent; border-top-color: currentColor; border-bottom: 0; }
.sep { width: 1px; height: 18px; margin: 0 2px; flex: none; background: linear-gradient(#efead2, #a79c70, #efead2); }

.form { flex: 1; display: flex; flex-direction: column; }
.bank-form { padding: 0 7px; }
.bank-form .row { margin-top: 3px; }
.bank-form .wide { margin-top: 4px; }
.format-form { padding: 8px; gap: 6px; }
.foot { height: 27px; flex: none; display: flex; align-items: center; justify-content: flex-end; padding: 0 4px 2px 0; border-top: 1px solid #b5ab84; background: #f5f2de; color: #5a4300; }
.foot.plain { background: #fcfaeb; }
.foot.bare { border-top: 0; height: 24px; }
.ok { font-weight: bold; font-size: 12px; padding: 0 3px; }
.txt { display: flex; align-items: center; gap: 3px; padding: 0 4px; }

/* Lists and scroll bars */
.content { flex: 1; display: flex; padding: 8px; }
.split { gap: 2px; padding-bottom: 0; }
.frame { flex: 1; min-width: 0; display: grid; grid-template: 1fr 17px / minmax(0, 1fr) 17px; border: 1px solid #b5ab84; background: #fff; }
.tree { flex: none; width: 155px; }
.pane { overflow: hidden; }
.list { width: 100%; table-layout: fixed; border-collapse: separate; border-spacing: 0; }
.list th, .list td { padding: 0 0 0 4px; white-space: nowrap; overflow: hidden; text-align: left; font-weight: normal; }
.list th { height: 21px; color: #5a4300; background: linear-gradient(#fbf9ee, #ece6c9); border: solid #b5ab84; border-width: 0 1px 1px 0; }
.list td { height: 19px; padding-top: 1px; color: #000; border: solid #c5ccd3; border-width: 0 1px 1px 0; }
.list th:last-child, .list td:last-child { border-right: 0; }
.list .cur td { border-color: #a9c0e2; }
.list .top { vertical-align: top; padding-top: 4px; }
.list .right { text-align: right; padding-right: 4px; }
.list .pic { padding: 0 4px; }
.list .one { padding-left: 17px; }
.list .n { text-align: right; padding: 1px 4px 0 0; }
.fold { display: flex; align-items: center; gap: 5px; padding-left: 2px; }
.sel, .list .sel { background: #6f97d0; color: #fff; }
.th-sort { display: flex; align-items: center; justify-content: space-between; }
.th-sort .ic { margin-right: 5px; }
.c24 { width: 24px; } .c26 { width: 26px; } .c35 { width: 35px; } .c39 { width: 39px; } .c47 { width: 47px; } .c100 { width: 100px; }
.c131 { width: 131px; } .c263 { width: 263px; } .c280 { width: 280px; }
.node { display: flex; align-items: center; height: 19px; border-bottom: 1px solid #a9c0e2; }
.exp { width: 24px; flex: none; padding-left: 6px; }
.node .sel { line-height: 18px; margin-left: 4px; padding: 0 2px; }
.vs { display: flex; flex-direction: column; border-left: 1px solid #c8c09c; background: #faf9f4; }
.hs { display: flex; border-top: 1px solid #b5ab84; background: #faf9f4; }
.vs button, .hs button { font-size: 9px; line-height: 9px; color: #777; background: linear-gradient(#fbf9ef, #efebd3); }
.vs button { height: 21px; flex: none; border: solid #c8c09c; border-width: 0 0 1px; }
.vs button:last-child { border-width: 1px 0 0; }
.hs button { width: 21px; flex: none; border-right: 1px solid #c8c09c; }
.hs button:last-child { border-left: 1px solid #c8c09c; border-right: 0; }
.hs .dim { color: #c9c4b0; }
.track { flex: 1; }
.thumb { flex: none; display: flex; align-items: center; justify-content: center; background: linear-gradient(#f8f5e4, #e5dfbf); border: solid #b5ab84; border-width: 0 1px 0 0; }
.vs .thumb { height: 16px; border-width: 1px 0; }
.thumb::after { content: ""; width: 5px; height: 5px; border-radius: 50%; background: #d8d2b6; }
.t79 { width: 79px; } .t199 { width: 199px; } .t351 { width: 351px; }
.corner { border: solid #c8c09c; border-width: 1px 0 0 1px; }
.mode { height: 25px; flex: none; display: flex; align-items: center; padding: 0 0 2px 8px; }
.mode .chk + .chk { margin-left: 18px; }

/* Report card */
.report-form { padding: 5px 8px 0 7px; gap: 4px; }
.report-form .first { margin-bottom: 3px; }
.report-form .tall { height: 26px; }
.tall span { white-space: normal; width: 345px; }
.focus { outline: 1px dotted #000; }
.row > .push { margin: 0 7px 0 auto; }
.path-head { display: flex; align-items: center; height: 23px; }
.path-head label { width: 85px; flex: none; }
.path-tools { flex: 1; display: flex; align-items: center; justify-content: flex-end; height: 23px; border-top: 1px solid #b5ab84; color: #5a4300; }
.path { display: block; width: 100%; height: 44px; margin-top: -4px; padding: 2px; resize: none; border: 1px solid #b0a67c; border-radius: 3px; background: #fbf8e8; color: #000; }

.arrows { position: absolute; left: 0; top: 0; fill: #ed1c24; shape-rendering: crispEdges; pointer-events: none; }
```
